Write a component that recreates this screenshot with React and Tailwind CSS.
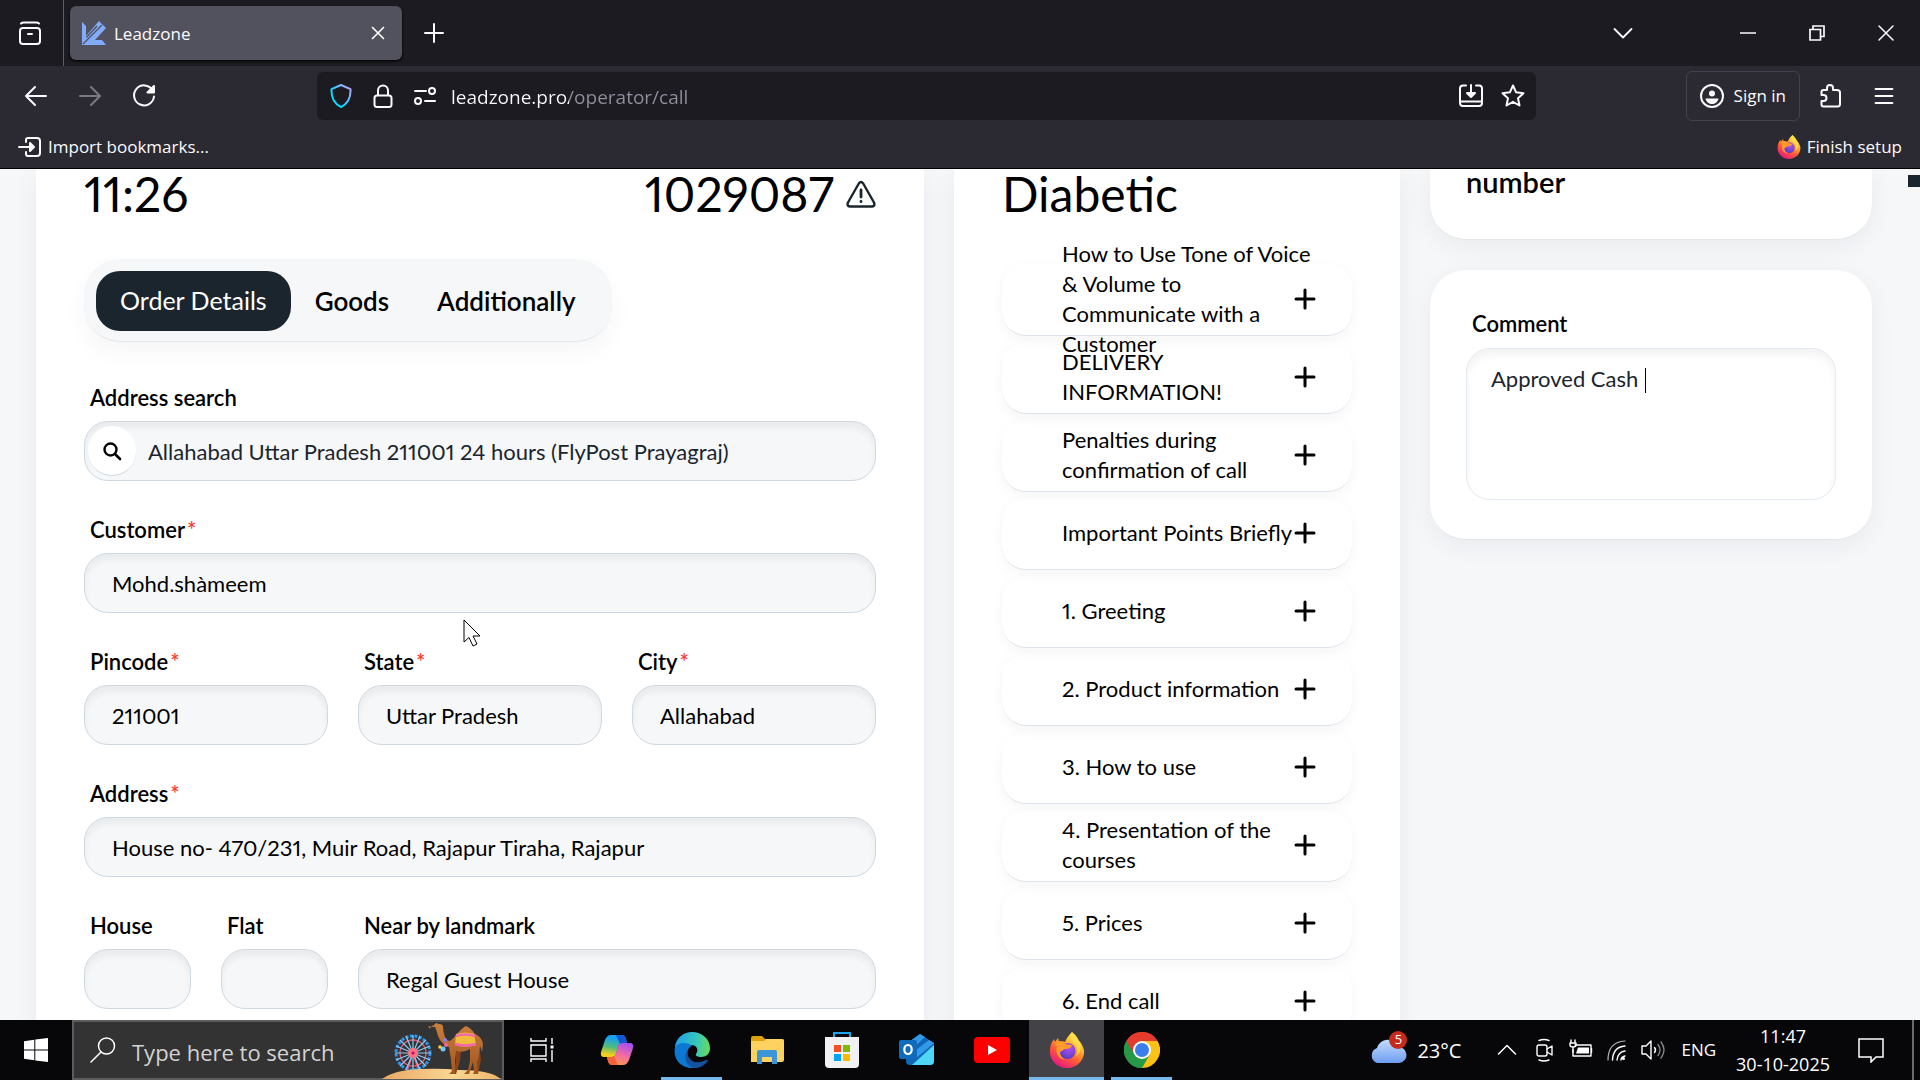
import React, { useState } from 'react';

const tabs = ['Order Details', 'Goods', 'Additionally'];

const scripts = [
    'How to Use Tone of Voice\n& Volume to\nCommunicate with a\nCustomer',
    'DELIVERY\nINFORMATION!',
    'Penalties during\nconfirmation of call',
    'Important Points Briefly',
    '1. Greeting',
    '2. Product information',
    '3. How to use',
    '4. Presentation of the\ncourses',
    '5. Prices',
    '6. End call',
];

const Icon = ({ children, className = 'size-6', box = 24 }) => (
    <svg viewBox={`0 0 ${box} ${box}`} className={`shrink-0 ${className}`} fill="none" stroke="currentColor" strokeWidth="2" strokeLinecap="round" strokeLinejoin="round" aria-hidden="true">
        {children}
    </svg>
);

const FirefoxLogo = ({ className }) => (
    <svg viewBox="0 0 36 36" className={className} aria-hidden="true">
        <defs>
            <linearGradient id="fxBody" x1="0.85" y1="0.05" x2="0.3" y2="1">
                <stop offset="0" stopColor="#fff44f" />
                <stop offset="0.35" stopColor="#ffb02e" />
                <stop offset="0.65" stopColor="#ff5a36" />
                <stop offset="1" stopColor="#e31587" />
            </linearGradient>
            <radialGradient id="fxGlobe" cx="0.6" cy="0.3" r="0.8">
                <stop offset="0" stopColor="#b650f0" />
                <stop offset="1" stopColor="#4a3cc4" />
            </radialGradient>
        </defs>
        <path d="M23 0c5 4 6 7 7 9 2 1 4 6 5 9 1 10-7 18-17 18S0 28 1 18c0-5 2-8 4-11l1 3 3-4 1 4c2-1 4-1 6 0 2-5 5-8 7-10z" fill="url(#fxBody)" />
        <circle cx="18.500" cy="19" r="8" fill="url(#fxGlobe)" />
        <path d="M6 10c4-2 8-1 11 2 2 1 5 0 6 2-1 2-4 3-6 3-3 0-3 2-6 3 0 4 2 6 5 8C9 27 6 20 8 15z" fill="#ff9a2b" />
        <path d="M22 9c6 3 8 9 5 15 5-3 6-10 3-15-2-3-5-5-7-9-1 3-2 6-1 9z" fill="#ffe04a" opacity=".8" />
    </svg>
);

const TabStrip = () => (
    <div className="flex h-[66px] items-center bg-[#1c1b22] text-[#fbfbfe]">
        <button aria-label="Recent browsing" className="flex h-full w-16 items-center justify-center border-r border-[#5b5b66] pr-1">
            <Icon className="size-7" box={28}>
                <rect x="4" y="9" width="20" height="16" rx="3" />
                <path d="M5 4.500q1-1 3-1h12q2 0 3 1M12 15h4" />
            </Icon>
        </button>
        <div className="ml-1.5 flex h-[54px] w-[332px] items-center rounded-md bg-[#52525e] pr-2.5 pl-3 shadow-sm shadow-black">
            <svg viewBox="0 0 24 24" className="size-6" aria-hidden="true">
                <path d="M0 1l4 4v10L17 0l7 7L13 19h7l4 5H0z" fill="#83abfb" />
                <path d="M4.500 16.500L15 5M1 23L20 4" stroke="#52525e" strokeWidth="1.300" />
            </svg>
            <span className="ml-2 flex-1 pt-0.5 text-[17px]">Leadzone</span>
            <button aria-label="Close tab" className="p-1">
                <Icon className="size-5" box={20}>
                    <path d="M4.500 4.500l11 11m0-11l-11 11" strokeWidth="1.700" />
                </Icon>
            </button>
        </div>
        <button aria-label="New tab" className="ml-5">
            <Icon><path d="M12 3v18M3 12h18" /></Icon>
        </button>
        <div className="flex-1" />
        <button aria-label="List all tabs" className="mr-20">
            <Icon className="size-5" box={20}><path d="M1.500 6l8.500 8.500L18.500 6" strokeWidth="1.800" /></Icon>
        </button>
        <button aria-label="Minimize" className="flex w-[69px] justify-center">
            <Icon className="size-4" box={16}><path d="M0 8h16" strokeWidth="1.500" /></Icon>
        </button>
        <button aria-label="Restore" className="flex w-[69px] justify-center">
            <Icon className="size-4" box={16}>
                <path d="M1 4.500h10.500V15H1zM4 4V1h11v10.500h-3" strokeWidth="1.700" strokeLinecap="butt" strokeLinejoin="miter" />
            </Icon>
        </button>
        <button aria-label="Close window" className="flex w-[69px] justify-center">
            <Icon className="size-4" box={16}><path d="M1 1l14 14M15 1L1 15" strokeWidth="1.500" /></Icon>
        </button>
    </div>
);

const AddressBar = () => (
    <div className="mr-[150px] ml-[161px] flex h-12 flex-1 items-center rounded-md bg-[#1c1b22] pr-[11px] pl-3 text-[#fbfbfe]">
        <svg viewBox="0 0 24 24" className="size-6" fill="none" aria-hidden="true">
            <defs>
                <linearGradient id="shield" x1="0" y1="1" x2="1" y2="0">
                    <stop offset="0.300" stopColor="#00ddff" />
                    <stop offset="1" stopColor="#cb9eff" />
                </linearGradient>
            </defs>
            <path d="M12 1l9.500 4.200c.3 6-1 13.500-9.500 17.800C3.500 18.700 2.200 11.200 2.500 5.200z" stroke="url(#shield)" strokeWidth="2" strokeLinejoin="round" />
        </svg>
        <Icon className="ml-[18px] size-6">
            <path d="M7 11V6.500a5 5 0 0110 0V11" />
            <rect x="3.500" y="11.500" width="17" height="11.500" rx="2.500" />
        </Icon>
        <Icon className="ml-[18px] size-6">
            <path d="M2 7h11M12 17h10" />
            <circle cx="19" cy="7" r="3" />
            <circle cx="5" cy="17" r="3" />
        </Icon>
        <input
            aria-label="Address"
            defaultValue="leadzone.pro/operator/call"
            className="ml-3.5 h-10 min-w-0 flex-1 bg-[linear-gradient(to_right,#fbfbfe_118px,#8f8f9d_118px)] bg-clip-text pt-0.5 text-[19px] text-transparent outline-none"
        />
        <button aria-label="Save page">
            <Icon>
                <path d="M7 1.500H4Q1 1.500 1 4.500V19q0 3 3 3h16q3 0 3-3V4.500q0-3-3-3h-3M1 17.500h22M12 1v9" />
                <path d="M8 9l4 4 4-4z" fill="currentColor" />
            </Icon>
        </button>
        <button aria-label="Bookmark this page" className="ml-[18px]">
            <Icon><path d="M12 1.500l3.100 6.800 7.400.9-5.500 5 1.500 7.300-6.500-3.700-6.500 3.700L7 14.200l-5.500-5 7.400-.9z" /></Icon>
        </button>
    </div>
);

const NavBar = () => (
    <div className="flex h-[60px] items-center bg-[#2b2a33] text-[#fbfbfe]">
        <button aria-label="Back" className="ml-6">
            <Icon><path d="M22 12H2m9-9l-9 9 9 9" /></Icon>
        </button>
        <button aria-label="Forward" className="ml-[30px] text-[#7b7a84]">
            <Icon><path d="M2 12h20m-9-9l9 9-9 9" /></Icon>
        </button>
        <button aria-label="Reload" className="ml-[30px]">
            <Icon>
                <path d="M20.500 6A10 10 0 1022 12.500" />
                <path d="M22 2v6.500h-6.500z" fill="currentColor" />
            </Icon>
        </button>
        <AddressBar />
        <button className="flex h-[50px] items-center gap-2.5 rounded-md border border-[#42414d] px-[13px] text-[17px]">
            <Icon>
                <circle cx="12" cy="12" r="11" />
                <circle cx="12" cy="9.500" r="3" fill="currentColor" stroke="none" />
                <path d="M5.500 14.500h13c-1 4-3.500 5.500-6.500 5.500s-5.500-1.500-6.500-5.500z" fill="currentColor" stroke="none" />
            </Icon>
            Sign in
        </button>
        <button aria-label="Extensions" className="ml-[19px]">
            <Icon>
                <path d="M2.500 11V8q0-2 2-2H8V4a3 3 0 016 0v2h4q3 0 3 2.500V20q0 2.500-2.500 2.500h-14q-2 0-2-2V17h2a3 3 0 000-6z" />
            </Icon>
        </button>
        <button aria-label="Application menu" className="mr-6 ml-[29px]">
            <Icon><path d="M3.500 5h17M3.500 12h17M3.500 19h17" strokeWidth="1.800" /></Icon>
        </button>
    </div>
);

const BookmarksBar = () => (
    <div className="flex h-[43px] items-start justify-between border-b border-black bg-[#2b2a33] px-[18px] pt-[9px] text-[17px] leading-6 text-[#fbfbfe]">
        <button className="flex items-center gap-1.5">
            <Icon>
                <path d="M8 7V5q0-2 2-2h9q3 0 3 3v12q0 3-3 3h-9q-2 0-2-2v-2M1 12h12" />
                <path d="M12 8l4 4-4 4z" fill="currentColor" />
            </Icon>
            Import bookmarks...
        </button>
        <button className="flex items-center gap-1.5">
            <FirefoxLogo className="size-6" />
            Finish setup
        </button>
    </div>
);

const Field = ({ id, label, value, required, search, className = '' }) => (
    <div className={className}>
        <label htmlFor={id} className="mb-2 block pl-1.5 text-[22px] leading-[30px] font-semibold">
            {label}
            {required && <span className="ml-0.5 text-[#ff3b30]">*</span>}
        </label>
        <div className="relative">
            {search && (
                <button type="button" aria-label="Search address" className="absolute top-[5px] left-1 flex h-[50px] w-12 items-center justify-center rounded-[24px] border-b border-[#cdd9e3] bg-white">
                    <Icon className="size-5" box={20}>
                        <circle cx="8.500" cy="8.500" r="6" strokeWidth="2.400" />
                        <path d="M13 13l5 5" strokeWidth="2.600" />
                    </Icon>
                </button>
            )}
            <input
                id={id}
                defaultValue={value}
                className={`h-[60px] w-full rounded-[24px] border border-[#cdd9e3] bg-[#f5f7f9] pr-4 text-[22px] shadow-[inset_0_6px_6px_rgba(0,0,0,0.05)] outline-none ${search ? 'pl-[63px] text-[#1b252d]' : 'pl-[27px]'}`}
            />
        </div>
    </div>
);

const OrderPanel = () => {
    const [active, setActive] = useState(tabs[0]);

    return (
        <section className="relative bg-white px-12 shadow-[0_6px_24px_rgba(27,37,45,0.06)]">
            <div className="flex items-center justify-between text-[48px] leading-[50px]">
                <span>11:26</span>
                <span className="flex items-center gap-3">
                    1029087
                    <Icon className="size-[30px] text-[#1b252d]" box={30}>
                        <path d="M12.800 4.500Q15 1.500 17.200 4.500L28 23.500q1.500 4-2.500 4h-21q-4 0-2.500-4z" strokeWidth="2.400" />
                        <path d="M15 11v7M15 22.500v.2" strokeWidth="2.800" />
                    </Icon>
                </span>
            </div>

            <div className="mt-10 flex w-fit rounded-[36px] border-b border-[#e4e6e8] bg-[#f5f7f9] px-3 pt-3 pb-2.5 shadow-[0_10px_24px_rgba(0,0,0,0.04)]">
                {tabs.map((tab) => (
                    <button
                        key={tab}
                        onClick={() => setActive(tab)}
                        className={`h-[60px] rounded-[24px] px-6 ${tab === active ? 'bg-[#1b252d] text-[25px] text-white' : 'text-[26px] font-semibold'}`}
                    >
                        {tab}
                    </button>
                ))}
            </div>

            <form className="mt-[41px] grid grid-cols-6 gap-x-[30px] gap-y-[34px]">
                <Field id="search" label="Address search" value="Allahabad Uttar Pradesh 211001 24 hours (FlyPost Prayagraj)" search className="col-span-6" />
                <Field id="customer" label="Customer" value="Mohd.shàmeem" required className="col-span-6" />
                <Field id="pincode" label="Pincode" value="211001" required className="col-span-2" />
                <Field id="state" label="State" value="Uttar Pradesh" required className="col-span-2" />
                <Field id="city" label="City" value="Allahabad" required className="col-span-2" />
                <Field id="address" label="Address" value="House no- 470/231, Muir Road, Rajapur Tiraha, Rajapur" required className="col-span-6" />
                <Field id="house" label="House" value="" />
                <Field id="flat" label="Flat" value="" />
                <Field id="landmark" label="Near by landmark" value="Regal Guest House" className="col-span-4" />
            </form>

            {/* mouse pointer */}
            <svg viewBox="0 0 18 28" className="absolute top-[450px] left-[427px] h-7 w-[18px]" aria-hidden="true">
                <path d="M1 1v22l5-4.500 4 8.500 4-2-4-8h7z" fill="#fff" stroke="#000" strokeWidth="1" />
            </svg>
        </section>
    );
};

const ScriptPanel = () => (
    <section className="bg-white px-12 shadow-[0_6px_24px_rgba(27,37,45,0.06)]">
        <h2 className="text-[48px] leading-[50px]">Diabetic</h2>
        <div className="mt-[45px] flex flex-col gap-1.5">
            {scripts.map((item) => (
                <button key={item} className="flex h-[72px] items-center rounded-[24px] border-b border-[#dde3ea] pr-9 pb-0.5 pl-[60px] text-left text-[22px] leading-[30px] shadow-[0_4px_14px_rgba(27,37,45,0.04)]">
                    <span className="w-0 flex-1 whitespace-pre">{item}</span>
                    <Icon className="size-[22px]" box={22}><path d="M11 2v18M2 11h18" strokeWidth="3" /></Icon>
                </button>
            ))}
        </div>
    </section>
);

const SidePanel = () => (
    <div className="flex flex-col gap-[30px]">
        <section className="rounded-b-[36px] border-b border-[#e4e6e8] bg-white px-9 pb-11 shadow-[0_6px_24px_rgba(27,37,45,0.06)]">
            <h3 className="text-[29px] leading-[26px] font-semibold">number</h3>
        </section>
        <section className="rounded-[36px] border-b border-[#e4e6e8] bg-white px-9 py-[39px] shadow-[0_6px_24px_rgba(27,37,45,0.06)]">
            <label htmlFor="comment" className="mb-[9px] block pl-1.5 text-[22px] leading-[30px] font-semibold">Comment</label>
            <div className="relative">
                <textarea
                    id="comment"
                    defaultValue="Approved Cash "
                    className="block h-[152px] w-full resize-none rounded-[24px] border border-[#e3eaf1] px-6 py-[15px] text-[22px] leading-[30px] text-[#1b252d] shadow-[inset_0_6px_8px_rgba(0,0,0,0.05)] outline-none"
                />
                <span className="absolute top-5 left-[179px] h-[25px] w-px bg-black" />
            </div>
        </section>
    </div>
);

const taskApps = [
    {
        name: 'Task view',
        icon: (
            <svg viewBox="0 0 24 24" className="size-6" fill="none" stroke="#fff" strokeWidth="1.400">
                <path d="M1 0v3h15V0M1 7h15v11H1zM1 24v-3h15v3M22 0v6M22 12v12" />
                <path d="M20.500 7.500h3v3h-3z" fill="#fff" stroke="none" />
            </svg>
        ),
    },
    {
        name: 'Copilot',
        icon: (
            <svg viewBox="0 0 36 36" className="size-9">
                <defs>
                    <linearGradient id="cpA" x1="0.5" y1="0" x2="0.3" y2="1">
                        <stop offset="0.150" stopColor="#1aa0f0" />
                        <stop offset="0.550" stopColor="#4fbd7a" />
                        <stop offset="0.900" stopColor="#f2cf1d" />
                    </linearGradient>
                    <linearGradient id="cpB" x1="0.7" y1="0" x2="0.3" y2="1">
                        <stop offset="0" stopColor="#a64ff0" />
                        <stop offset="0.500" stopColor="#f26aa5" />
                        <stop offset="1" stopColor="#ff9a4a" />
                    </linearGradient>
                </defs>
                <path d="M16 3h7q3 0 4 4l1 4h-4q-4 0-5 4l-2 7q-1 3-4 3H5q-4 0-3-5L6 8q2-5 6-5z" fill="url(#cpA)" />
                <path d="M20 33h-7q-3 0-4-4l-1-4h4q4 0 5-4l2-7q1-3 4-3h8q4 0 3 5l-4 12q-2 5-6 5z" fill="url(#cpB)" />
                <path d="M17 3h6q3 0 4 4l1 4h-4q-2 0-3 1z" fill="#1757d4" />
                <path d="M19 33h-6q-3 0-4-4l-1-4h4q2 0 3-1z" fill="#f4613a" />
            </svg>
        ),
    },
    {
        name: 'Edge',
        open: true,
        icon: (
            <svg viewBox="0 0 36 36" className="size-9">
                <defs>
                    <linearGradient id="edA" x1="0" y1="0.4" x2="1" y2="0.5">
                        <stop offset="0" stopColor="#1f9fe8" />
                        <stop offset="0.600" stopColor="#35c6c0" />
                        <stop offset="1" stopColor="#66dc5a" />
                    </linearGradient>
                </defs>
                <path d="M1 14C3 5 10 0 18 0c10 0 18 7 18 16 0 6-4 9-9 9-3 0-6-1-5-3 3-4 1-9-5-9-7 0-13 1-16 6z" fill="url(#edA)" />
                <path d="M1 15c4-5 13-5 17-1-5 2-6 8-4 13 2 4 6 7 10 8C11 39-2 30 1 15z" fill="#0c78d4" />
                <path d="M14 18c-2 9 6 16 18 10q3-1 1 2c-4 5-9 6-12 6-8-1-13-11-7-18z" fill="#14519e" />
            </svg>
        ),
    },
    {
        name: 'File Explorer',
        icon: (
            <svg viewBox="0 0 34 28" className="h-7 w-[34px]">
                <path d="M1 2q0-2 2-2h9l3 3h17q2 0 2 2v4H1z" fill="#dda20a" />
                <path d="M1 5h13l2-2h16q2 0 2 2v19q0 2-2 2H1z" fill="#fdd25e" />
                <path d="M7 28V16q0-2 2-2h16q2 0 2 2v12h-5v-7H12v7z" fill="#3a96d8" />
            </svg>
        ),
    },
    {
        name: 'Microsoft Store',
        icon: (
            <svg viewBox="0 0 36 36" className="size-9">
                <path d="M10 7V1h16v6" fill="none" stroke="#1ba7ea" strokeWidth="2" />
                <path d="M1 5h34v27q0 4-4 4H5q-4 0-4-4z" fill="#f1f1f1" />
                <path d="M10 13h7v7h-7z" fill="#f25022" />
                <path d="M19 13h7v7h-7z" fill="#7fba00" />
                <path d="M10 22h7v7h-7z" fill="#00a4ef" />
                <path d="M19 22h7v7h-7z" fill="#ffb900" />
            </svg>
        ),
    },
    {
        name: 'Outlook',
        icon: (
            <svg viewBox="0 0 36 32" className="h-8 w-9">
                <path d="M7 10L21 0l14 9v18q0 4-4 4H11q-4 0-4-4z" fill="#1266b8" />
                <path d="M21 0l5 3L11 17H7v-7zM30 6l5 3-19 16-4-5z" fill="#2f9be8" />
                <path d="M35 11v16q0 4-4 4H13z" fill="#4fd8f5" />
                <rect y="6" width="18" height="19" rx="2" fill="#0f6cbd" />
                <ellipse cx="9" cy="15.500" rx="3.700" ry="4.500" fill="none" stroke="#fff" strokeWidth="2.200" />
            </svg>
        ),
    },
    {
        name: 'YouTube',
        icon: (
            <svg viewBox="0 0 36 26" className="h-[26px] w-9">
                <rect width="36" height="26" rx="4" fill="#f00" />
                <path d="M14 8l9 5-9 5z" fill="#fff" />
            </svg>
        ),
    },
    { name: 'Firefox', open: true, active: true, icon: <FirefoxLogo className="size-9" /> },
    {
        name: 'Chrome',
        open: true,
        icon: (
            <svg viewBox="0 0 36 36" className="size-9">
                <path d="M18 18L2.400 9A18 18 0 0133.600 9z" fill="#e33b2e" />
                <path d="M18 18L33.600 9A18 18 0 0118 36z" fill="#fbc116" />
                <path d="M18 18l0 18A18 18 0 012.400 9z" fill="#279847" />
                <path d="M18 9h15.600L25 22 18 36l-3-6z" fill="#fbc116" />
                <path d="M2.400 9L10.500 23 18 27l7.500-4L18 36A18 18 0 012.400 9z" fill="#279847" />
                <path d="M2.400 9A18 18 0 0133.600 9H18l-8 5-1 6z" fill="#e33b2e" />
                <circle cx="18" cy="18" r="9" fill="#fff" />
                <circle cx="18" cy="18" r="7" fill="#3b7ded" />
            </svg>
        ),
    },
];

const SearchArt = () => (
    <svg viewBox="0 0 120 58" className="h-[58px] w-[120px] shrink-0" aria-hidden="true">
        <defs>
            <linearGradient id="fur" x1="0" y1="0" x2="0" y2="1">
                <stop offset="0" stopColor="#c97f3e" />
                <stop offset="1" stopColor="#a2551f" />
            </linearGradient>
            <linearGradient id="sand" x1="0" y1="0" x2="1" y2="0">
                <stop offset="0" stopColor="#eaa765" />
                <stop offset="0.600" stopColor="#f9d794" />
                <stop offset="1" stopColor="#eeb567" />
            </linearGradient>
        </defs>
        <g transform="translate(31 32)" fill="none">
            <path d="M-8 24L0 0l8 24" stroke="#e8536a" strokeWidth="2" />
            <circle r="17" stroke="#2e95e8" strokeWidth="3" strokeDasharray="3 1.500" />
            <circle r="13" stroke="#e0607c" strokeWidth="1.300" />
            <path d="M-18 0h36M0-18v36M-13-13l26 26M13-13l-26 26M-7-17l14 34M7-17l-14 34M-17-7l34 14M-17 7l34-14" stroke="#8fc9f5" strokeWidth="1.200" />
            <circle r="5" fill="#ff6f80" />
            <circle r="1.500" fill="#b01060" />
        </g>
        <path d="M0 58q12-9 38-10 20-1 40 1 30 0 41 9z" fill="url(#sand)" />
        {/* far legs */}
        <path d="M73 28l1 12-3 13h3l4-13 1-11zM91 28l4 11-2 14h3l3-15-2-12z" fill="#8a4518" />
        {/* neck, body and near legs */}
        <path d="M48 8q0-3 4-4l2-2 3 1q4 0 4 3 0 5 2 10 2 4 5 4 4-3 7-7 5-6 9-8 5 2 9 8 7 3 8 10l-1 8-2-6-1 9-2 8 1 11h-5l1-2-1-10-4 12h-5l4-4 2-9 0-12q-6 4-14 2l-1 10 0 13h-6l3-3-1-11-2-13q-8-3-11-11-1-5-3-9-4 0-7-1z" fill="url(#fur)" />
        <path d="M74 13q10-3 18 0l2 11q-10 3-21 0z" fill="#f2bd3d" />
        <path d="M74 15q9-3 19 0M73 23q10 3 21 0" stroke="#f268a8" strokeWidth="2.500" fill="none" />
        <circle cx="63" cy="19" r="2" fill="#8a7bf0" />
        <circle cx="64" cy="24" r="2" fill="#f268a8" />
        <circle cx="61" cy="28" r="2.500" fill="#74c6f5" />
        <circle cx="58" cy="26" r="1.800" fill="#f4d34c" />
    </svg>
);

const Taskbar = () => (
    <footer className="flex h-[60px] shrink-0 items-center bg-[#07070a] text-white">
        <button aria-label="Start" className="flex w-[72px] justify-center">
            <svg viewBox="0 0 24 24" className="size-6" fill="#fff">
                <path d="M0 3.300l10.300-1.500v9.700H0zM11.300 1.600L24 0v11.500H11.300zM0 12.500h10.300v9.700L0 20.700zM11.300 12.500H24V24l-12.700-1.600z" />
            </svg>
        </button>
        <label className="flex h-full w-[432px] items-center border-2 border-[#5c5c5c] bg-[#333] pl-4">
            <Icon className="size-[26px]" box={26}>
                <circle cx="16.500" cy="9" r="8" strokeWidth="1.500" />
                <path d="M11 15L1 25" strokeWidth="1.500" />
            </Icon>
            <input aria-label="Search" placeholder="Type here to search" className="ml-4 w-0 flex-1 bg-transparent pt-1 text-[22px] outline-none placeholder:text-[#d2d2d2]" />
            <SearchArt />
        </label>
        {taskApps.map(({ name, icon, open, active }) => (
            <button key={name} aria-label={name} className={`relative flex h-full w-[75px] items-center justify-center ${active ? 'bg-[#424247]' : ''}`}>
                {icon}
                {open && <span className={`absolute bottom-0 h-[3px] bg-[#76b9ed] ${active ? 'w-full' : 'w-[61px]'}`} />}
            </button>
        ))}
        <div className="flex-1" />
        <button className="flex items-center gap-2.5 text-[20px]">
            <span className="relative">
                <svg viewBox="0 0 38 26" className="h-[26px] w-[38px]" aria-hidden="true">
                    <defs>
                        <linearGradient id="cloud" x1="0" y1="0" x2="0" y2="1">
                            <stop offset="0" stopColor="#c3dcff" />
                            <stop offset="1" stopColor="#6f9df0" />
                        </linearGradient>
                    </defs>
                    <path d="M8 26a8 8 0 010-15A11 11 0 0129 10a8 8 0 011 16z" fill="url(#cloud)" />
                </svg>
                <span className="absolute -top-1.5 right-0 flex size-[18px] items-center justify-center rounded-full bg-[#c42b1c] text-[13px]">5</span>
            </span>
            <span className="pt-0.5">23°C</span>
        </button>
        <button aria-label="Show hidden icons" className="ml-9">
            <Icon className="size-5" box={20}><path d="M1.500 14L10 5.500l8.500 8.500" strokeWidth="1.500" /></Icon>
        </button>
        <div className="ml-4 flex items-center gap-3">
            <Icon className="size-6">
                <rect x="4" y="7" width="10" height="11" rx="2" strokeWidth="1.400" />
                <path d="M14 11l5-3v9l-5-3M6 2.500q5-2 10 0M6 22q5 2 10 0" strokeWidth="1.400" />
            </Icon>
            <Icon className="size-6">
                <path d="M6 7h16v11H4v-6M22.500 10.500v4" strokeWidth="1.400" />
                <path d="M9 9.500h11v6H7z" fill="currentColor" stroke="none" />
                <path d="M2 2v3M6 2v3M1 5h6v2q0 2-3 2t-3-2zM4 9v5" strokeWidth="1.400" />
            </Icon>
            <Icon className="size-6">
                <path d="M3 22Q3 4 20 3" strokeWidth="1.200" opacity=".7" />
                <path d="M7.500 22Q8 9 20 8M12 22q1-8 8-9M16 22q0-3 4-4" strokeWidth="1.400" />
                <circle cx="18.500" cy="20.500" r="1.500" fill="currentColor" stroke="none" />
            </Icon>
            <Icon className="size-6">
                <path d="M1 8h4l5-5v18l-5-5H1zM13.500 9.500q2 2.500 0 5" strokeWidth="1.400" />
                <path d="M17 6.500q4 5.500 0 11M20 4q6 8 0 16" strokeWidth="1.400" opacity=".5" />
            </Icon>
        </div>
        <span className="ml-4 text-[17px]">ENG</span>
        <button className="ml-5 text-center text-[18px] leading-7">
            <span className="block">11:47</span>
            <span className="block">30-10-2025</span>
        </button>
        <button aria-label="Notifications" className="ml-7">
            <Icon className="size-[26px]" box={26}>
                <path d="M1 2h24v18h-7l-5 5v-5H1z" strokeWidth="1.500" strokeLinejoin="miter" />
            </Icon>
        </button>
        <div className="mr-1.5 ml-7 h-full w-0.5 bg-[#6a6a6c]" />
    </footer>
);

const App = () => (
    <div className="flex h-screen flex-col overflow-hidden font-['Open_Sans',sans-serif]">
        <header className="shrink-0">
            <TabStrip />
            <NavBar />
            <BookmarksBar />
        </header>
        <main className="relative min-h-0 flex-1 overflow-hidden bg-[#f5f7f9] pr-12 pl-9 font-['Lato',sans-serif] text-black proportional-nums">
            <div className="grid h-full grid-cols-[888fr_446fr_442fr] gap-[30px]">
                <OrderPanel />
                <ScriptPanel />
                <SidePanel />
            </div>
            <div className="absolute top-1.5 right-0 size-3 bg-[#1b252d]" />
        </main>
        <Taskbar />
    </div>
);

export default App;
